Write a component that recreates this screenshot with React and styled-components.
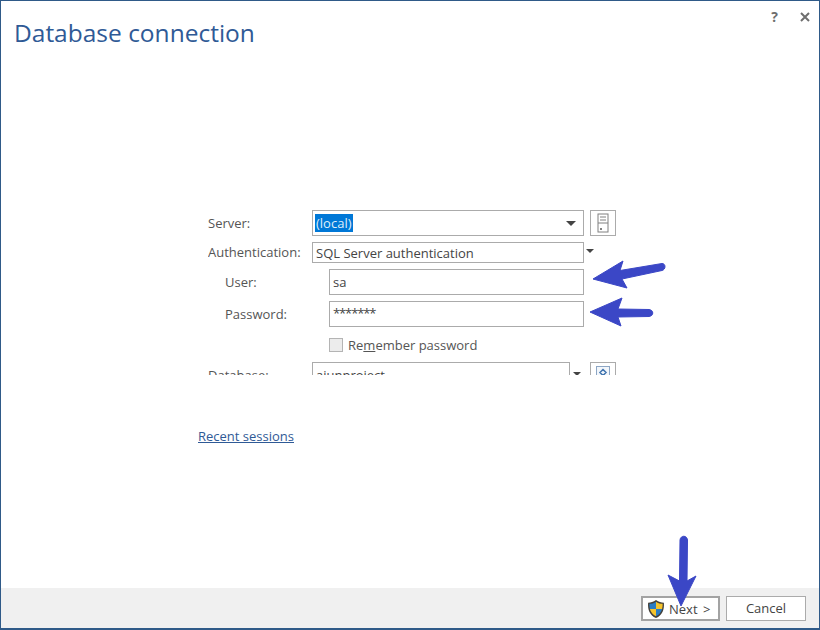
import React from 'react'
import styled, { createGlobalStyle } from 'styled-components'

const GlobalStyle = createGlobalStyle`
  html, body {
    margin: 0;
    padding: 0;
    background: #fff;
  }
  body {
    font-family: "Open Sans", "Noto Sans", sans-serif;
    font-size: 13px;
    color: #4c4c4c;
  }
`

const Dialog = styled.div`
  position: relative;
  box-sizing: border-box;
  width: 820px;
  height: 630px;
  display: flex;
  flex-direction: column;
  background: #fff;
  border: 1px solid #2f5a88;
  border-bottom-width: 2px;
  overflow: hidden;
`

const Header = styled.header`
  display: flex;
  justify-content: space-between;
  align-items: flex-start;
  height: 208px;
  flex: none;
`

const Title = styled.h1`
  margin: 15px 0 0 13px;
  font-size: 24.5px;
  line-height: 34px;
  font-weight: 400;
  color: #2f5a96;
`

const WindowButtons = styled.div`
  display: flex;
  gap: 22px;
  margin: 9px 9px 0 0;
  align-items: center;
  height: 14px;
`

const HelpMark = styled.span`
  font-size: 14px;
  line-height: 14px;
  font-weight: 700;
  color: #6e6e6e;
`

const Content = styled.main`
  flex: 1;
  padding: 1px 0 0 197px;
`

const Form = styled.div`
  width: 420px;
  height: 165px;
  margin-left: 10px;
  overflow: hidden;
  display: flex;
  flex-direction: column;
`

const Row = styled.div`
  display: flex;
  align-items: flex-start;
  flex: none;
  margin-top: ${(p) => p.$top || 0}px;
`

const Label = styled.label`
  flex: none;
  box-sizing: border-box;
  width: ${(p) => (p.$indent ? 121 : 104)}px;
  padding-left: ${(p) => (p.$indent ? 17 : 0)}px;
  line-height: ${(p) => p.$height || 26}px;
  color: #555;
`

const Field = styled.div`
  flex: none;
  box-sizing: border-box;
  display: flex;
  align-items: center;
  justify-content: space-between;
  width: ${(p) => p.$width}px;
  height: ${(p) => p.$height || 26}px;
  padding: 0 ${(p) => (p.$arrow ? 7 : 3)}px 0 3px;
  border: 1px solid #ababab;
  background: #fff;
  color: #444;
  white-space: nowrap;
`

const Selected = styled.span`
  display: inline-block;
  padding: 0 1px;
  margin-left: -1px;
  line-height: 18px;
  background: #0078d7;
  color: #dfeefa;
`

const Stars = styled.span`
  letter-spacing: -1.100px;
  margin-bottom: 2px;
`

const Caret = styled.span`
  flex: none;
  width: 0;
  height: 0;
  border-left: 5px solid transparent;
  border-right: 5px solid transparent;
  border-top: 5px solid #444;
`

const OuterCaret = styled(Caret)`
  margin: ${(p) => p.$top}px 0 0 ${(p) => p.$left}px;
  border-left-width: 4px;
  border-right-width: 4px;
  border-top-width: 4px;
`

const IconButton = styled.button`
  flex: none;
  box-sizing: border-box;
  width: 26px;
  height: 26px;
  margin-left: ${(p) => p.$left || 6}px;
  padding: 0;
  display: flex;
  align-items: center;
  justify-content: center;
  background: #fff;
  border: 1px solid #ababab;
`

const CheckRow = styled(Row)`
  align-items: center;
  padding-left: 121px;
  gap: 5px;
  height: 14px;
  color: #555;
`

const Checkbox = styled.span`
  flex: none;
  box-sizing: border-box;
  width: 14px;
  height: 14px;
  border: 1px solid #b4b4b4;
  background: #ececec;
`

const Underline = styled.span`
  text-decoration: underline;
`

const RecentLink = styled.a`
  display: inline-block;
  margin-top: 51px;
  line-height: 20px;
  color: #2f5a96;
  text-decoration: underline;
`

const Footer = styled.footer`
  flex: none;
  box-sizing: border-box;
  height: 40px;
  padding: 8px 13px 0 0;
  display: flex;
  justify-content: flex-end;
  gap: 6px;
  background: #f0f0f0;
`

const ActionButton = styled.button`
  box-sizing: border-box;
  width: ${(p) => p.$width}px;
  height: 25px;
  padding: 0 0 2px;
  display: flex;
  align-items: center;
  justify-content: center;
  background: #fff;
  border: ${(p) => (p.$primary ? '2px solid #a3a3a3' : '1px solid #ababab')};
  font: inherit;
  color: #444;
`

const NextButton = styled(ActionButton)`
  justify-content: flex-start;
  padding-left: 3px;
  padding-bottom: 0;
  gap: 3px;
  word-spacing: 2px;
`

const Arrow = styled.svg`
  position: absolute;
  left: -1px;
  top: -1px;
  pointer-events: none;
`

const Close = () => (
  <svg width="10" height="10" viewBox="0 0 10 10">
    <path d="M1 1 L9 9 M9 1 L1 9" stroke="#6e6e6e" strokeWidth="2" fill="none" />
  </svg>
)

const ServerIcon = () => (
  <svg width="12" height="20" viewBox="0 0 12 20">
    <rect x="1" y="1" width="10" height="18" fill="#fff" stroke="#808080" />
    <path d="M3 4 H9 M3 7 H9 M1 10 H11" stroke="#808080" />
    <rect x="3" y="15" width="2" height="2" fill="#808080" />
  </svg>
)

const NetworkIcon = () => (
  <svg width="16" height="20" viewBox="0 0 16 20">
    <rect x="1.500" y="1.500" width="13" height="17" fill="#f2f6fb" stroke="#8da6c4" />
    <path d="M8 4.500 L11 7.500 L8 10.500 L5 7.500 Z" fill="none" stroke="#3f73ae" strokeWidth="1.500" />
    <path d="M3 13 H13" stroke="#3f73ae" strokeWidth="2" />
  </svg>
)

const Shield = () => (
  <svg width="20" height="20" viewBox="0 0 19 19">
    <path d="M9.500 1 C7 3 4.500 3.500 2 3.500 C1.500 10 3.500 15.500 9.500 18 C15.500 15.500 17.500 10 17 3.500 C14.500 3.500 12 3 9.500 1 Z" fill="#44403a" />
    <path d="M9.500 2.500 C7.500 4 5.500 4.500 3.200 4.600 C3.200 6.500 3.300 8 3.700 9.500 H9.500 Z" fill="#2a7cc4" />
    <path d="M9.500 2.500 C11.500 4 13.500 4.500 15.800 4.600 C15.800 6.500 15.700 8 15.300 9.500 H9.500 Z" fill="#f6c42c" />
    <path d="M3.700 9.500 H9.500 V16.500 C6.500 15 4.500 12.500 3.700 9.500 Z" fill="#f6c42c" />
    <path d="M15.300 9.500 H9.500 V16.500 C12.500 15 14.500 12.500 15.300 9.500 Z" fill="#2a7cc4" />
  </svg>
)

const Arrows = () => (
  <Arrow width="820" height="630" viewBox="0 0 820 630">
    <g fill="#3b47c6" stroke="#3b47c6" strokeLinejoin="round">
      <path d="M593 279 L623 261 L620 270.500 L662 263.500 C666 263.500 666 269.500 662 270.500 L622 279 L627 288 Z" />
      <path d="M590 312 L622 298 L618 309 L649 309.500 C654 310 654 316 649 316.500 L618 317 L621 326 Z" />
      <path d="M681 606 L668 575 L679.500 581 L680 540 C680.500 535 687 535 687.500 540 L687 581 L696 576 Z" />
    </g>
  </Arrow>
)

export default function App() {
  return (
    <>
      <GlobalStyle />
      <Dialog>
        <Header>
          <Title>Database connection</Title>
          <WindowButtons>
            <HelpMark>?</HelpMark>
            <Close />
          </WindowButtons>
        </Header>
        <Content>
          <Form>
            <Row>
              <Label>Server:</Label>
              <Field $width={272} $arrow>
                <Selected>(local)</Selected>
                <Caret />
              </Field>
              <IconButton><ServerIcon /></IconButton>
            </Row>
            <Row $top={6}>
              <Label $height={21}>Authentication:</Label>
              <Field $width={272} $height={21}>SQL Server authentication</Field>
              <OuterCaret $top={7} $left={2} />
            </Row>
            <Row $top={6}>
              <Label $indent>User:</Label>
              <Field $width={255}>sa</Field>
            </Row>
            <Row $top={6}>
              <Label $indent>Password:</Label>
              <Field $width={255}><Stars>*******</Stars></Field>
            </Row>
            <CheckRow $top={11}>
              <Checkbox />
              <span>Re<Underline>m</Underline>ember password</span>
            </CheckRow>
            <Row $top={10}>
              <Label>Database:</Label>
              <Field $width={258}>ajunproject</Field>
              <OuterCaret $top={10} $left={3} />
              <IconButton $left={9}><NetworkIcon /></IconButton>
            </Row>
          </Form>
          <RecentLink>Recent sessions</RecentLink>
        </Content>
        <Footer>
          <NextButton $primary $width={79}><Shield />Next &gt;</NextButton>
          <ActionButton $width={80}>Cancel</ActionButton>
        </Footer>
        <Arrows />
      </Dialog>
    </>
  )
}
